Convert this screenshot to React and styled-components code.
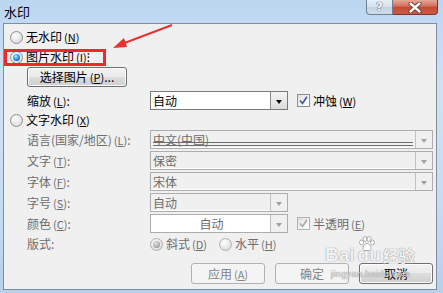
import React from 'react';
import styled, { createGlobalStyle, css } from 'styled-components';

const Global = createGlobalStyle`
  html, body { margin: 0; padding: 0; }
  body {
    width: 443px; height: 293px; overflow: hidden;
    font-family: "Noto Sans CJK SC", "Noto Sans", sans-serif;
    font-size: 12px; color: #000;
  }
`;

const Window = styled.div`
  position: relative;
  width: 443px;
  height: 293px;
  box-sizing: border-box;
  padding: 0 6px 3px 3px;
  display: flex;
  flex-direction: column;
  background: linear-gradient(180deg, #bcd6f0 0%, #cfe2f5 30%, #c6dcf1 70%, #b7cfe8 100%);
`;

const TitleBar = styled.div`
  height: 23px;
  display: flex;
  align-items: flex-start;
  flex-shrink: 0;
`;

const Title = styled.div`
  font-size: 13px;
  line-height: 14px;
  margin: 5px 0 0 1px;
  color: #000;
`;

const Caps = styled.div`
  margin-left: auto;
  margin-right: -1px;
  display: flex;
`;

const HelpBtn = styled.div`
  width: 27px;
  height: 15px;
  box-sizing: border-box;
  border: 1px solid #6f7f92;
  border-top: none;
  border-radius: 0 0 0 4px;
  background: linear-gradient(180deg, #e8eff7 0%, #d6e1ed 50%, #c4d2e2 51%, #d1dcea 100%);
  display: flex; align-items: center; justify-content: center;
  font: bold 12px "DejaVu Sans", sans-serif;
  color: #f4f7fb;
  text-shadow: 0 0 1px #3b4a5a, 0 0 1px #3b4a5a;
`;

const CloseBtn = styled.div`
  width: 45px;
  height: 15px;
  box-sizing: border-box;
  border: 1px solid #6b3a34;
  border-left: none;
  border-top: none;
  border-radius: 0 0 4px 0;
  background: linear-gradient(180deg, #e6a796 0%, #d2705c 45%, #c24a34 50%, #cf5a40 100%);
  display: flex; align-items: center; justify-content: center;
`;

const Client = styled.div`
  position: relative;
  flex: 1;
  box-sizing: border-box;
  border: 1px solid #7f8fa1;
  background: #f0f0f0;
  padding: 0 3px 0 6px;
  display: flex;
  flex-direction: column;
`;

const Row = styled.div`
  position: relative;
  display: flex;
  align-items: center;
  height: ${p => p.$h || 16}px;
  margin-top: ${p => p.$mt || 0}px;
  padding-left: ${p => p.$indent || 0}px;
  gap: ${p => p.$gap || 0}px;
  ${p => p.$marked && css`
    &::before {
      content: '';
      position: absolute;
      left: -6px; top: 0;
      width: 102px; height: 17px;
      box-sizing: border-box;
      border: 3px solid #f0272b;
    }
  `}
`;

const Field = styled.div`
  display: grid;
  grid-template-columns: 123px 1fr;
  align-items: center;
  height: ${p => p.$h || 19}px;
  margin-top: ${p => p.$mt || 0}px;
  padding-left: 17px;
`;

const Controls = styled.div`
  display: flex;
  align-items: center;
  height: 100%;
  gap: ${p => p.$gap || 0}px;
`;

const Text = styled.span`
  white-space: nowrap;
  line-height: 14px;
  color: ${p => (p.$dim ? '#6d6d6d' : '#000')};
`;

const Key = styled.span`
  font-size: 11px;
  margin-left: 2px;
  u { text-decoration: underline; }
`;

const RadioDot = styled.span`
  width: 13px;
  height: 13px;
  box-sizing: border-box;
  border-radius: 50%;
  flex-shrink: 0;
  margin-right: 3px;
  border: 1px solid ${p => (p.$disabled ? '#b1b1b1' : '#8e8f8f')};
  background: radial-gradient(circle at 40% 35%, #ffffff 0%, #e6e6e6 55%, #cfcfcf 100%);
  display: flex; align-items: center; justify-content: center;
  ${p => p.$checked && css`
    &::after {
      content: '';
      width: 7px; height: 7px;
      border-radius: 50%;
      background: ${p.$disabled
        ? 'radial-gradient(circle at 40% 35%, #e6e6e6 0%, #a9a9a9 60%, #8c8c8c 100%)'
        : 'radial-gradient(circle at 40% 35%, #b8f0ff 0%, #2a9be8 45%, #0d4f9e 100%)'};
    }
  `}
`;

const CheckBox = styled.span`
  width: 13px;
  height: 13px;
  box-sizing: border-box;
  flex-shrink: 0;
  margin-right: 3px;
  border: 1px solid ${p => (p.$disabled ? '#b1b1b1' : '#8e8f8f')};
  background: linear-gradient(135deg, #dcdcdc 0%, #f6f6f6 60%, #ffffff 100%);
  display: flex; align-items: center; justify-content: center;
`;

const Select = styled.div`
  position: relative;
  box-sizing: border-box;
  width: ${p => p.$w}px;
  height: ${p => p.$h || 19}px;
  display: flex;
  align-items: stretch;
  border: 1px solid ${p => (p.$enabled ? '#7a7a7a' : '#adadad')};
  background: ${p => (p.$white ? '#fff' : '#f0f0f0')};
  box-shadow: ${p => (p.$enabled ? 'none' : 'inset -1px -1px 0 #fff')};
`;

const SelectValue = styled.div`
  flex: 1;
  position: relative;
  padding-left: 2px;
  display: flex;
  align-items: center;
  justify-content: ${p => (p.$center ? 'center' : 'flex-start')};
  color: ${p => (p.$dim ? '#6d6d6d' : '#000')};
  line-height: 14px;
  ${p => p.$lines && css`
    &::after {
      content: '';
      position: absolute;
      left: 2px; right: 2px;
      bottom: 2px;
      height: 2px;
      border-top: 1px solid #6d6d6d;
      border-bottom: 1px solid #6d6d6d;
    }
  `}
`;

const SelectBtn = styled.div`
  width: 17px;
  box-sizing: border-box;
  border-left: 1px solid ${p => (p.$enabled ? '#8a8a8a' : '#c2c2c2')};
  background: ${p => (p.$enabled ? 'linear-gradient(180deg, #f4f4f4, #dcdcdc)' : '#f0f0f0')};
  display: flex; align-items: center; justify-content: center;
  &::after {
    content: '';
    border-left: 3.5px solid transparent;
    border-right: 3.5px solid transparent;
    border-top: 4px solid ${p => (p.$enabled ? '#000' : '#a0a0a0')};
    margin-top: 2px;
  }
`;

const PushButton = styled.div`
  box-sizing: border-box;
  width: ${p => p.$w || 74}px;
  height: ${p => p.$h || 21}px;
  border-radius: 3px;
  display: flex; align-items: center; justify-content: center;
  line-height: 14px;
  white-space: nowrap;
  ${p => p.$disabled ? css`
    border: 1px solid #adb2b5;
    background: #f4f4f4;
    color: #838383;
  ` : css`
    border: 1px solid #707070;
    background: linear-gradient(180deg, #f2f2f2 0%, #ebebeb 49%, #dddddd 50%, #cfcfcf 100%);
    color: #000;
    box-shadow: inset 0 0 0 1px #fcfcfc;
  `}
`;

const Footer = styled.div`
  display: flex;
  justify-content: flex-end;
  gap: 10px;
  margin-top: 11px;
  height: 21px;
`;

const Overlay = styled.svg`
  position: absolute;
  left: 0; top: 0;
  pointer-events: none;
`;

const Watermark = styled.div`
  position: absolute;
  left: 325px;
  top: 244px;
  width: max-content;
  white-space: nowrap;
  pointer-events: none;
  color: rgba(255, 255, 255, 0.88);
  text-shadow: 0 0 1px #9a9a9a, 0 0 1px #9a9a9a;
  font-family: "Liberation Sans", Arial, sans-serif;
  display: flex;
  flex-direction: column;
  align-items: flex-start;
`;

const WmTop = styled.div`
  display: flex;
  align-items: center;
  height: 22px;
  font-size: 19px;
  font-weight: bold;
  line-height: 22px;
`;

const WmDu = styled.span`
  position: relative;
  margin-left: 3px;
`;

const Paw = styled.svg`
  position: absolute;
  left: 0;
  top: -8px;
`;

const WmCn = styled.span`
  font-family: "Noto Sans CJK SC", sans-serif;
  font-size: 16px;
  margin-left: 2px;
`;

const WmSub = styled.div`
  font-size: 9px;
  line-height: 10px;
  margin: 3px 0 0 6px;
  letter-spacing: 0.4px;
  color: rgba(255, 255, 255, 0.6);
`;

const Radio = ({ checked, disabled, children }) => (
  <>
    <RadioDot $checked={checked} $disabled={disabled} />
    <Text $dim={disabled}>{children}</Text>
  </>
);

const Check = ({ disabled, children }) => (
  <>
    <CheckBox $disabled={disabled}>
      <svg width="9" height="9" viewBox="0 0 9 9">
        <path d="M1 4.5 L3.5 7.5 L8 0.8" fill="none" stroke={disabled ? '#a8a8a8' : '#3b55a8'} strokeWidth="1.6" />
      </svg>
    </CheckBox>
    <Text $dim={disabled}>{children}</Text>
  </>
);

const Dropdown = ({ w, value, enabled, white, center, lines }) => (
  <Select $w={w} $enabled={enabled} $white={white || enabled}>
    <SelectValue $dim={!enabled} $center={center} $lines={lines}>{value}</SelectValue>
    <SelectBtn $enabled={enabled} />
  </Select>
);

const K = ({ c }) => <Key>(<u>{c}</u>)</Key>;

export default function App() {
  return (
    <>
      <Global />
      <Window>
        <TitleBar>
          <Title>水印</Title>
          <Caps>
            <HelpBtn>?</HelpBtn>
            <CloseBtn>
              <svg width="14" height="11" viewBox="0 0 14 11">
                <path d="M2.5 1.5 L11.5 9.5 M11.5 1.5 L2.5 9.5" stroke="#5a2a24" strokeWidth="4" strokeLinecap="round" />
                <path d="M2.5 1.5 L11.5 9.5 M11.5 1.5 L2.5 9.5" stroke="#ffffff" strokeWidth="2.4" strokeLinecap="round" />
              </svg>
            </CloseBtn>
          </Caps>
        </TitleBar>
        <Client>
          <Row $mt={5}>
            <Radio>无水印<K c="N" /></Radio>
          </Row>
          <Row $mt={4} $marked>
            <Radio checked>图片水印<K c="I" />⁝</Radio>
          </Row>
          <Row $mt={2} $h={20} $indent={17}>
            <PushButton $w={100} $h={20}>选择图片<K c="P" />...</PushButton>
          </Row>
          <Field $mt={4} $h={18}>
            <Text>缩放<K c="L" />:</Text>
            <Controls $gap={9}>
              <Dropdown w={138} value="自动" enabled />
              <Row><Check>冲蚀<K c="W" /></Check></Row>
            </Controls>
          </Field>
          <Row $mt={3}>
            <Radio>文字水印<K c="X" /></Radio>
          </Row>
          <Field $mt={2}>
            <Text $dim>语言(国家/地区)<K c="L" />:</Text>
            <Controls><Dropdown w={283} value="中文(中国)" lines /></Controls>
          </Field>
          <Field $mt={2}>
            <Text $dim>文字<K c="T" />:</Text>
            <Controls><Dropdown w={283} value="保密" /></Controls>
          </Field>
          <Field $mt={2}>
            <Text $dim>字体<K c="F" />:</Text>
            <Controls><Dropdown w={283} value="宋体" /></Controls>
          </Field>
          <Field $mt={2}>
            <Text $dim>字号<K c="S" />:</Text>
            <Controls><Dropdown w={138} value="自动" /></Controls>
          </Field>
          <Field $mt={2}>
            <Text $dim>颜色<K c="C" />:</Text>
            <Controls $gap={9}>
              <Dropdown w={138} value="自动" white center />
              <Row><Check disabled>半透明<K c="E" /></Check></Row>
            </Controls>
          </Field>
          <Field $mt={3} $h={16}>
            <Text $dim>版式:</Text>
            <Controls>
              <Radio checked disabled>斜式<K c="D" /></Radio>
              <Row $indent={12}><Radio disabled>水平<K c="H" /></Radio></Row>
            </Controls>
          </Field>
          <Footer>
            <PushButton $disabled>应用<K c="A" /></PushButton>
            <PushButton $disabled>确定</PushButton>
            <PushButton>取消</PushButton>
          </Footer>
        </Client>
        <Overlay width="443" height="293" viewBox="0 0 443 293">
          <line x1="172" y1="25" x2="122" y2="44" stroke="#e8322f" strokeWidth="2" />
          <polygon points="113,48 124,38 127,47" fill="#e8322f" />
        </Overlay>
        <Watermark>
          <WmTop>
            Bai
            <WmDu>
              <Paw width="18" height="16" viewBox="0 0 18 16">
                <g fill="rgba(255,255,255,0.9)" stroke="#9a9a9a" strokeWidth="0.8">
                  <ellipse cx="3.5" cy="6.5" rx="2" ry="2.5" />
                  <ellipse cx="7" cy="3" rx="2" ry="2.5" />
                  <ellipse cx="11" cy="3" rx="2" ry="2.5" />
                  <ellipse cx="14.5" cy="6.5" rx="2" ry="2.5" />
                  <path d="M9 7.5 C6 7.5 4.5 11.5 5.2 13.5 C6 15.2 7.8 14.5 9 14.5 C10.2 14.5 12 15.2 12.8 13.5 C13.5 11.5 12 7.5 9 7.5 Z" />
                </g>
              </Paw>
              du
            </WmDu>
            <WmCn>经验</WmCn>
          </WmTop>
          <WmSub>jingyan.baidu.com</WmSub>
        </Watermark>
      </Window>
    </>
  );
}
